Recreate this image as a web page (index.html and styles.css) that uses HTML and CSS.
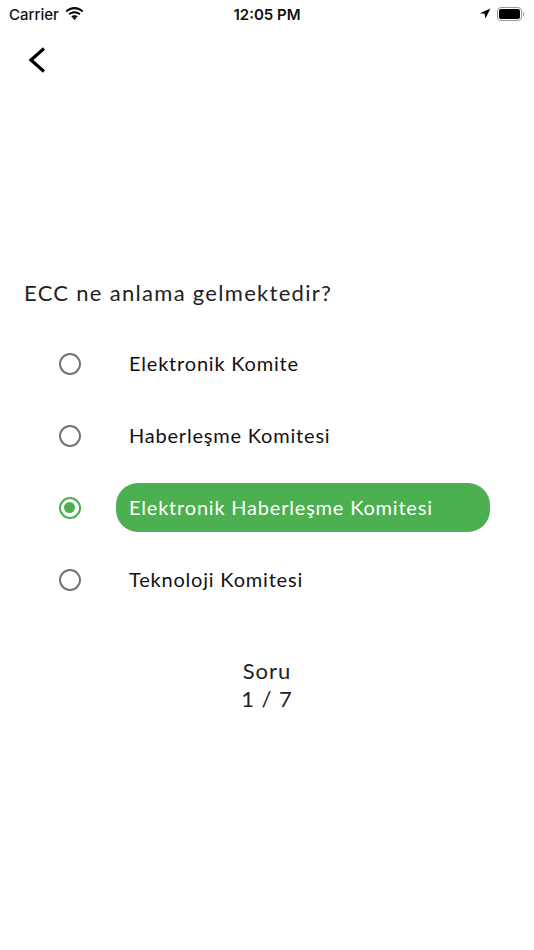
FILE: index.html
```html
<!DOCTYPE html>
<html>
<head>
  <meta charset="UTF-8">
  <title>Quiz</title>
  <link rel="stylesheet" href="styles.css">
</head>
<body>
  <!-- Status bar -->
  <div class="status">
    <div class="status-left">
      <span>Carrier</span>
      <svg class="wifi" width="19" height="14" viewBox="0 0 19 14">
        <path d="M9.5 2.2c2.9 0 5.5 1.1 7.5 3l1.4-1.5C16 1.4 12.9 0 9.5 0S3 1.4.6 3.7L2 5.2c2-1.9 4.6-3 7.5-3z" fill="#000"/>
        <path d="M9.5 6.3c1.8 0 3.4.7 4.6 1.8l1.4-1.5C14 5.1 11.8 4.2 9.5 4.2S5 5.1 3.5 6.6l1.4 1.5c1.2-1.1 2.8-1.8 4.6-1.8z" fill="#000"/>
        <path d="M9.5 10.3c.8 0 1.4.3 1.9.7L9.5 13 7.6 11c.5-.4 1.1-.7 1.9-.7zM9.5 8.2c1.3 0 2.4.5 3.2 1.2l-1.3 1.4c-.5-.4-1.2-.7-1.9-.7s-1.4.3-1.9.7L6.3 9.4c.8-.7 1.9-1.2 3.2-1.2z" fill="#000"/>
      </svg>
    </div>
    <div class="status-time">12:05 PM</div>
    <div class="status-right">
      <svg width="12" height="12" viewBox="0 0 12 12">
        <path d="M11.5.5L.8 5.2l4.9.6.6 4.9z" fill="#000"/>
      </svg>
      <svg width="28" height="14" viewBox="0 0 28 14">
        <rect x="0.5" y="0.5" width="24" height="13" rx="3.5" fill="none" stroke="#999"/>
        <rect x="2" y="2" width="21" height="10" rx="2" fill="#000"/>
        <path d="M26 5v4c.8-.3 1.3-1.1 1.3-2S26.8 5.3 26 5z" fill="#999"/>
      </svg>
    </div>
  </div>

  <!-- Navigation -->
  <div class="nav">
    <svg class="back" width="20" height="26" viewBox="0 0 20 26">
      <path d="M17 1.5L4 13l13 11.5" fill="none" stroke="#000" stroke-width="3.2"/>
    </svg>
  </div>

  <div class="content">
    <div class="question">ECC ne anlama gelmektedir?</div>

    <div class="options">
      <div class="option">
        <span class="radio"></span>
        <span class="label">Elektronik Komite</span>
      </div>
      <div class="option">
        <span class="radio"></span>
        <span class="label">Haberleşme Komitesi</span>
      </div>
      <div class="option selected">
        <span class="radio"></span>
        <span class="label">Elektronik Haberleşme Komitesi</span>
      </div>
      <div class="option">
        <span class="radio"></span>
        <span class="label">Teknoloji Komitesi</span>
      </div>
    </div>

    <div class="counter">
      <div>Soru</div>
      <div>1 / 7</div>
    </div>
  </div>
</body>
</html>
```

FILE: styles.css
```css
body { margin: 0; background: #fff; font-family: Lato, "Open Sans", sans-serif; color: #111; }

.status { height: 28px; display: flex; align-items: center; justify-content: space-between; padding: 0 9px; font-family: Inter, "Liberation Sans", sans-serif; font-size: 15px; font-weight: 500; position: relative; }
.status-left { display: flex; align-items: center; gap: 6px; }
.status-time { position: absolute; left: 0; right: 0; text-align: center; font-weight: 600; pointer-events: none; }
.status-right { display: flex; align-items: center; gap: 6px; }

.nav { height: 64px; display: flex; align-items: center; padding-left: 27px; }

.content { padding-top: 186px; }
.question { padding-left: 24px; font-size: 22px; line-height: 30px; letter-spacing: 1.3px; color: #222; }

.options { margin-top: 31px; }
.option { display: flex; align-items: center; height: 49px; margin-bottom: 23px; padding-left: 59px; }
.radio { width: 22px; height: 22px; box-sizing: border-box; border: 2.5px solid #757575; border-radius: 50%; flex: none; position: relative; }
.label { margin-left: 35px; width: 374px; height: 49px; box-sizing: border-box; padding: 0 0 2px 13px; display: flex; align-items: center; font-size: 20px; letter-spacing: 0.8px; color: #111; border-radius: 22px; }

.selected .radio { border-color: #4caf50; }
.selected .radio::after { content: ""; position: absolute; left: 3px; top: 3px; width: 11px; height: 11px; border-radius: 50%; background: #4caf50; }
.selected .label { background: #4caf50; color: #fff; }

.counter { margin-top: 53px; text-align: center; font-size: 22px; line-height: 28px; letter-spacing: 1px; color: #222; }
```
